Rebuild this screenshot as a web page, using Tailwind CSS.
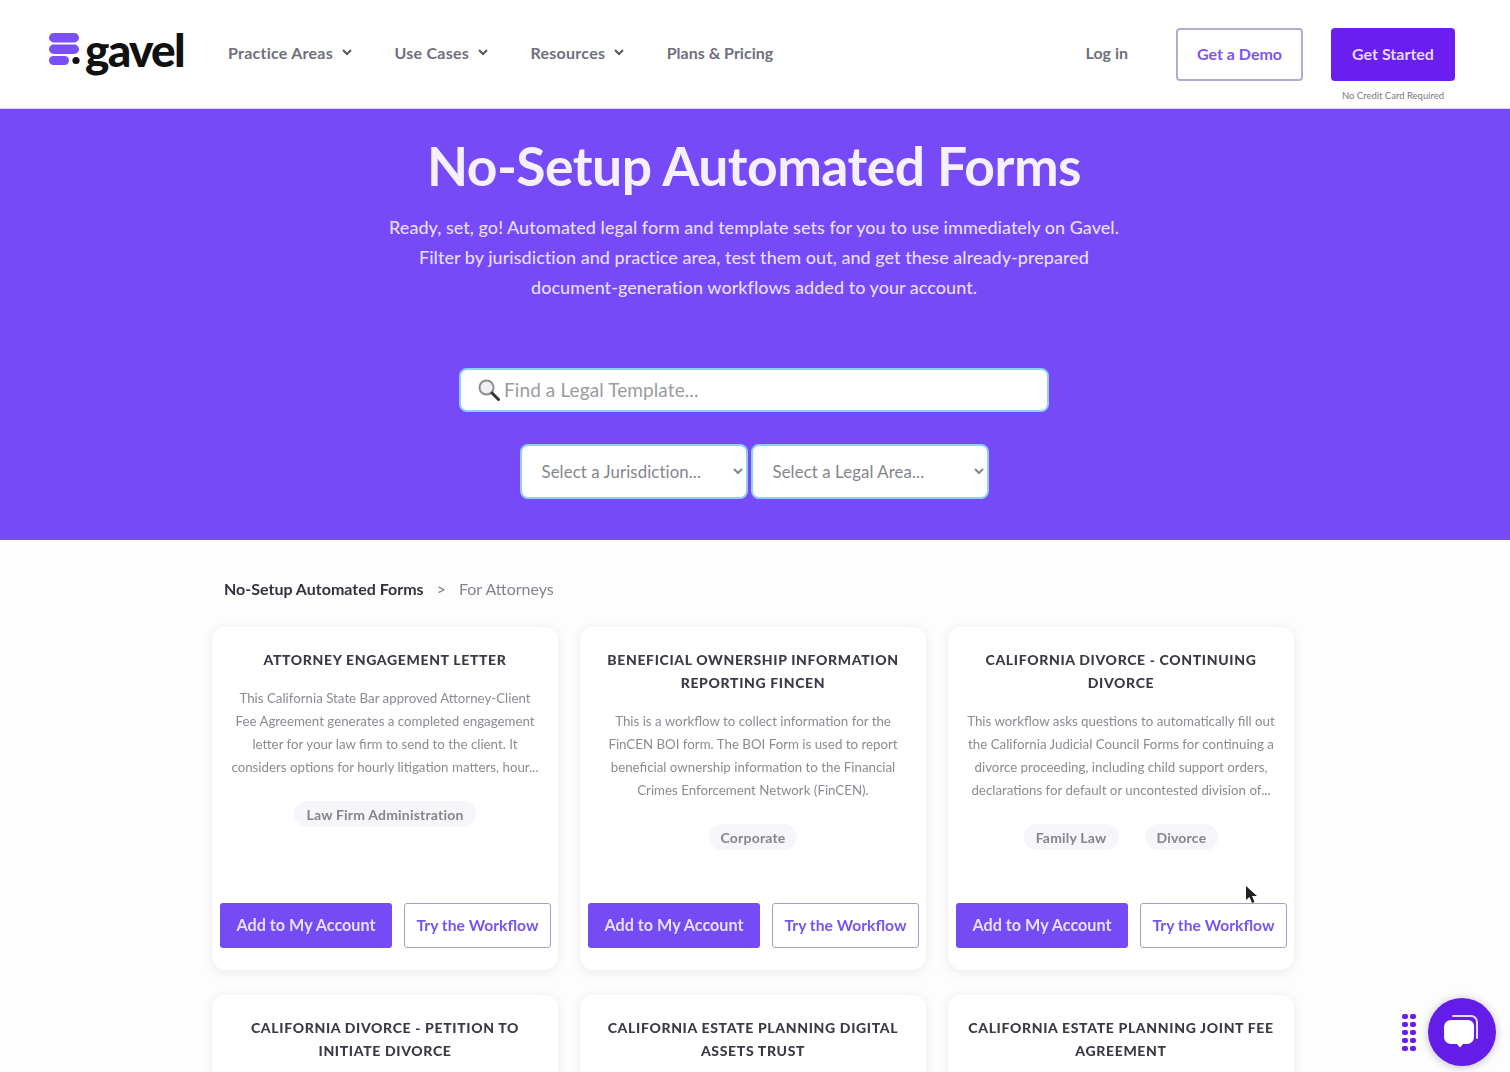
<!DOCTYPE html>
<html lang="en">
<head>
    <meta charset="UTF-8">
    <meta name="viewport" content="width=device-width, initial-scale=1.0">
    <title>No-Setup Automated Forms | Gavel</title>
    <script src="https://cdn.jsdelivr.net/npm/@tailwindcss/browser@4"></script>
</head>
<body class="font-['Lato',sans-serif] bg-[#fdfdfd] text-[#3a3a44]">
<div class="relative h-[1072px] overflow-hidden blur-[0.6px]">

    <!-- Header -->
    <header class="relative h-[109px] bg-white flex items-start pl-[49px] pr-[55px] border-b border-[#d9d4ee]">
        <a class="flex items-start gap-[4px] mt-[24px] w-[179px] shrink-0">
            <svg width="32" height="34" viewBox="0 0 32 34" class="mt-[9px]">
                <rect x="0" y="0" width="30" height="9.5" rx="4.7" fill="#7a4ff5"/>
                <rect x="0" y="11.5" width="30" height="9.5" rx="4.7" fill="#7a4ff5"/>
                <rect x="0" y="23" width="20" height="9" rx="4.5" fill="#7a4ff5"/>
                <circle cx="27" cy="27.5" r="3.6" fill="#111"/>
            </svg>
            <span class="text-[46px] leading-[52px] font-black text-[#111] tracking-[-1.7px]">gavel</span>
        </a>
        <nav class="flex items-center gap-[42.5px] mt-[42px] text-[16px] leading-[21px] font-bold tracking-[0.25px] text-[#6f6f7d]">
            <a class="flex items-center gap-[9px]">Practice Areas
                <svg width="10" height="7" viewBox="0 0 10 7" fill="none" stroke="#55555f" stroke-width="2"><path d="M1 1l4 4 4-4"/></svg></a>
            <a class="flex items-center gap-[9px]">Use Cases
                <svg width="10" height="7" viewBox="0 0 10 7" fill="none" stroke="#55555f" stroke-width="2"><path d="M1 1l4 4 4-4"/></svg></a>
            <a class="flex items-center gap-[9px]">Resources
                <svg width="10" height="7" viewBox="0 0 10 7" fill="none" stroke="#55555f" stroke-width="2"><path d="M1 1l4 4 4-4"/></svg></a>
            <a class="tracking-normal">Plans &amp; Pricing</a>
        </nav>
        <div class="ml-auto flex items-start">
            <a class="mt-[42px] mr-[48px] text-[16px] leading-[21px] font-bold text-[#6f6f7d]">Log in</a>
            <a class="mt-[28px] mr-[28px] w-[127px] h-[53px] pb-[1px] flex items-center justify-center rounded-[4px] border-2 border-[#b3abd0] text-[16px] font-bold text-[#7d55ef]">Get a Demo</a>
            <div class="mt-[28px] flex flex-col items-center">
                <a class="w-[124px] h-[53px] pb-[1px] flex items-center justify-center rounded-[4px] bg-[#6a1ff0] text-[16px] font-bold text-[#e4d9fb]">Get Started</a>
                <span class="mt-[9px] text-[9.5px] leading-[12px] text-[#77777f]">No Credit Card Required</span>
            </div>
        </div>
    </header>

    <!-- Hero -->
    <section class="h-[431px] pr-[2px] bg-[#764af6] flex flex-col items-center text-white">
        <h1 class="mt-[22px] text-[53.4px] leading-[68px] font-bold text-[#f4f0ff] tracking-[-0.5px]">No-Setup Automated Forms</h1>
        <p class="mt-[13px] text-[18px] leading-[30px] text-center font-medium tracking-[0.03px] text-[#e6defd]">
            Ready, set, go! Automated legal form and template sets for you to use immediately on Gavel.<br>
            Filter by jurisdiction and practice area, test them out, and get these already-prepared<br>
            document-generation workflows added to your account.
        </p>
        <div class="mt-[66px] w-[590px] h-[44px] flex items-center gap-[3px] pl-[16px] rounded-[8px] bg-white border-2 border-[#8fd0ee]">
            <svg width="24" height="24" viewBox="0 0 24 24" fill="none" class="shrink-0">
                <circle cx="9.5" cy="9.5" r="7" fill="#eef0f2" stroke="#8d8d92" stroke-width="2"/>
                <path d="M15 15l6.5 6.5" stroke="#33333a" stroke-width="3" stroke-linecap="round"/>
            </svg>
            <input class="w-full text-[19px] tracking-[0.1px] outline-none placeholder:text-[#9b9ba1] font-['Lato',sans-serif]" placeholder="Find a Legal Template...">
        </div>
        <div class="mt-[32px] flex gap-[3px]">
            <select class="w-[228px] h-[55px] pl-[16px] rounded-[8px] bg-white border-2 border-[#8fd0ee] text-[16.8px] tracking-[0.1px] text-[#85858c]">
                <option>Select a Jurisdiction...</option>
            </select>
            <select class="w-[238px] h-[55px] pl-[16px] rounded-[8px] bg-white border-2 border-[#8fd0ee] text-[16.8px] tracking-[0.1px] text-[#85858c]">
                <option>Select a Legal Area...</option>
            </select>
        </div>
    </section>

    <!-- Breadcrumb -->
    <div class="mt-[39px] ml-[224px] flex items-center text-[16px] leading-[20px]">
        <span class="font-bold text-[#33333d]">No-Setup Automated Forms</span>
        <span class="mx-[13px] text-[#77777f]">&gt;</span>
        <span class="text-[#85858f]">For Attorneys</span>
    </div>

    <!-- Cards -->
    <main class="mt-[28px] ml-[212px] grid grid-cols-[346px_346px_346px] gap-x-[22px] gap-y-[25px]">

        <article class="h-[343px] rounded-[14px] bg-white shadow-[0_2px_12px_rgba(40,30,90,0.09)] flex flex-col items-center px-[8px] pt-[21px] pb-[22px]">
            <h2 class="px-[10px] text-[14px] leading-[23px] font-black uppercase tracking-[0.65px] text-center text-[#3a3a44]">Attorney Engagement Letter</h2>
            <p class="mt-[16px] px-[8px] text-[13.3px] leading-[23px] text-center text-[#8b8b93]">This California State Bar approved Attorney-Client Fee Agreement generates a completed engagement letter for your law firm to send to the client. It considers options for hourly litigation matters, hour...</p>
            <div class="mt-[22px] flex gap-[26px]">
                <span class="h-[26px] px-[12px] flex items-center rounded-full bg-[#f6f5fa] text-[14px] tracking-[0.2px] font-bold text-[#85858f]">Law Firm Administration</span>
            </div>
            <div class="mt-auto w-full flex gap-[12px]">
                <a class="shrink-0 w-[172px] h-[45px] flex items-center justify-center rounded-[3px] bg-[#754bf3] text-[16.2px] font-bold text-[#e6defd]">Add to My Account</a>
                <a class="shrink-0 w-[147px] h-[45px] flex items-center justify-center rounded-[3px] border border-[#a79ed0] text-[15.7px] font-bold text-[#7a55ea]">Try the Workflow</a>
            </div>
        </article>

        <article class="h-[343px] rounded-[14px] bg-white shadow-[0_2px_12px_rgba(40,30,90,0.09)] flex flex-col items-center px-[8px] pt-[21px] pb-[22px]">
            <h2 class="px-[10px] text-[14px] leading-[23px] font-black uppercase tracking-[0.65px] text-center text-[#3a3a44]">Beneficial Ownership Information Reporting FinCEN</h2>
            <p class="mt-[16px] px-[8px] text-[13.3px] leading-[23px] text-center text-[#8b8b93]">This is a workflow to collect information for the FinCEN BOI form. The BOI Form is used to report beneficial ownership information to the Financial Crimes Enforcement Network (FinCEN).</p>
            <div class="mt-[22px] flex gap-[26px]">
                <span class="h-[26px] px-[12px] flex items-center rounded-full bg-[#f6f5fa] text-[14px] tracking-[0.2px] font-bold text-[#85858f]">Corporate</span>
            </div>
            <div class="mt-auto w-full flex gap-[12px]">
                <a class="shrink-0 w-[172px] h-[45px] flex items-center justify-center rounded-[3px] bg-[#754bf3] text-[16.2px] font-bold text-[#e6defd]">Add to My Account</a>
                <a class="shrink-0 w-[147px] h-[45px] flex items-center justify-center rounded-[3px] border border-[#a79ed0] text-[15.7px] font-bold text-[#7a55ea]">Try the Workflow</a>
            </div>
        </article>

        <article class="h-[343px] rounded-[14px] bg-white shadow-[0_2px_12px_rgba(40,30,90,0.09)] flex flex-col items-center px-[8px] pt-[21px] pb-[22px]">
            <h2 class="px-[10px] text-[14px] leading-[23px] font-black uppercase tracking-[0.65px] text-center text-[#3a3a44]">California Divorce - Continuing Divorce</h2>
            <p class="mt-[16px] px-[6px] text-[13.3px] leading-[23px] text-center text-[#8b8b93]">This workflow asks questions to automatically fill out the California Judicial Council Forms for continuing a divorce proceeding, including child support orders, declarations for default or uncontested division of...</p>
            <div class="mt-[22px] flex gap-[26px]">
                <span class="h-[26px] px-[12px] flex items-center rounded-full bg-[#f6f5fa] text-[14px] tracking-[0.2px] font-bold text-[#85858f]">Family Law</span>
                <span class="h-[26px] px-[12px] flex items-center rounded-full bg-[#f6f5fa] text-[14px] tracking-[0.2px] font-bold text-[#85858f]">Divorce</span>
            </div>
            <div class="mt-auto w-full flex gap-[12px]">
                <a class="shrink-0 w-[172px] h-[45px] flex items-center justify-center rounded-[3px] bg-[#754bf3] text-[16.2px] font-bold text-[#e6defd]">Add to My Account</a>
                <a class="shrink-0 w-[147px] h-[45px] flex items-center justify-center rounded-[3px] border border-[#a79ed0] text-[15.7px] font-bold text-[#7a55ea]">Try the Workflow</a>
            </div>
        </article>

        <article class="h-[343px] rounded-[14px] bg-white shadow-[0_2px_12px_rgba(40,30,90,0.09)] flex flex-col items-center px-[8px] pt-[21px]">
            <h2 class="px-[10px] text-[14px] leading-[23px] font-black uppercase tracking-[0.65px] text-center text-[#3a3a44]">California Divorce - Petition to Initiate Divorce</h2>
        </article>
        <article class="h-[343px] rounded-[14px] bg-white shadow-[0_2px_12px_rgba(40,30,90,0.09)] flex flex-col items-center px-[8px] pt-[21px]">
            <h2 class="px-[10px] text-[14px] leading-[23px] font-black uppercase tracking-[0.65px] text-center text-[#3a3a44]">California Estate Planning Digital Assets Trust</h2>
        </article>
        <article class="h-[343px] rounded-[14px] bg-white shadow-[0_2px_12px_rgba(40,30,90,0.09)] flex flex-col items-center px-[8px] pt-[21px]">
            <h2 class="px-[10px] text-[14px] leading-[23px] font-black uppercase tracking-[0.65px] text-center text-[#3a3a44]">California Estate Planning Joint Fee Agreement</h2>
        </article>
    </main>

    <!-- Mouse cursor from the recording -->
    <svg class="absolute left-[1245px] top-[885px]" width="13" height="20" viewBox="0 0 13 20">
        <path d="M1 1v14l3.5-3 2.5 6 2.5-1-2.5-6h5z" fill="#222"/>
    </svg>

    <!-- Chat widget -->
    <div class="absolute left-[1402px] top-[1014px] grid grid-cols-2 gap-x-[2px] gap-y-[3px]">
        <i class="w-[6px] h-[5px] rounded-[2px] bg-[#6a1ff0]"></i><i class="w-[6px] h-[5px] rounded-[2px] bg-[#6a1ff0]"></i>
        <i class="w-[6px] h-[5px] rounded-[2px] bg-[#6a1ff0]"></i><i class="w-[6px] h-[5px] rounded-[2px] bg-[#6a1ff0]"></i>
        <i class="w-[6px] h-[5px] rounded-[2px] bg-[#6a1ff0]"></i><i class="w-[6px] h-[5px] rounded-[2px] bg-[#6a1ff0]"></i>
        <i class="w-[6px] h-[5px] rounded-[2px] bg-[#6a1ff0]"></i><i class="w-[6px] h-[5px] rounded-[2px] bg-[#6a1ff0]"></i>
        <i class="w-[6px] h-[5px] rounded-[2px] bg-[#6a1ff0]"></i><i class="w-[6px] h-[5px] rounded-[2px] bg-[#6a1ff0]"></i>
    </div>
    <div class="absolute left-[1428px] top-[998px] w-[68px] h-[68px] rounded-full bg-[#641ce8] shadow-[0_1px_8px_rgba(0,0,0,0.25)] flex items-center justify-center">
        <svg width="38" height="38" viewBox="0 0 38 38">
            <path d="M10 3h18a6 6 0 0 1 6 6v16" fill="none" stroke="#e5d9fb" stroke-width="2" stroke-linecap="round"/>
            <path d="M8 7h17a6 6 0 0 1 6 6v11a7 7 0 0 1-7 7h-4l-3 3.500-3-3.500H8a7 7 0 0 1-7-7V14a7 7 0 0 1 7-7z" fill="#fff"/>
        </svg>
    </div>
</div>
</body>
</html>
